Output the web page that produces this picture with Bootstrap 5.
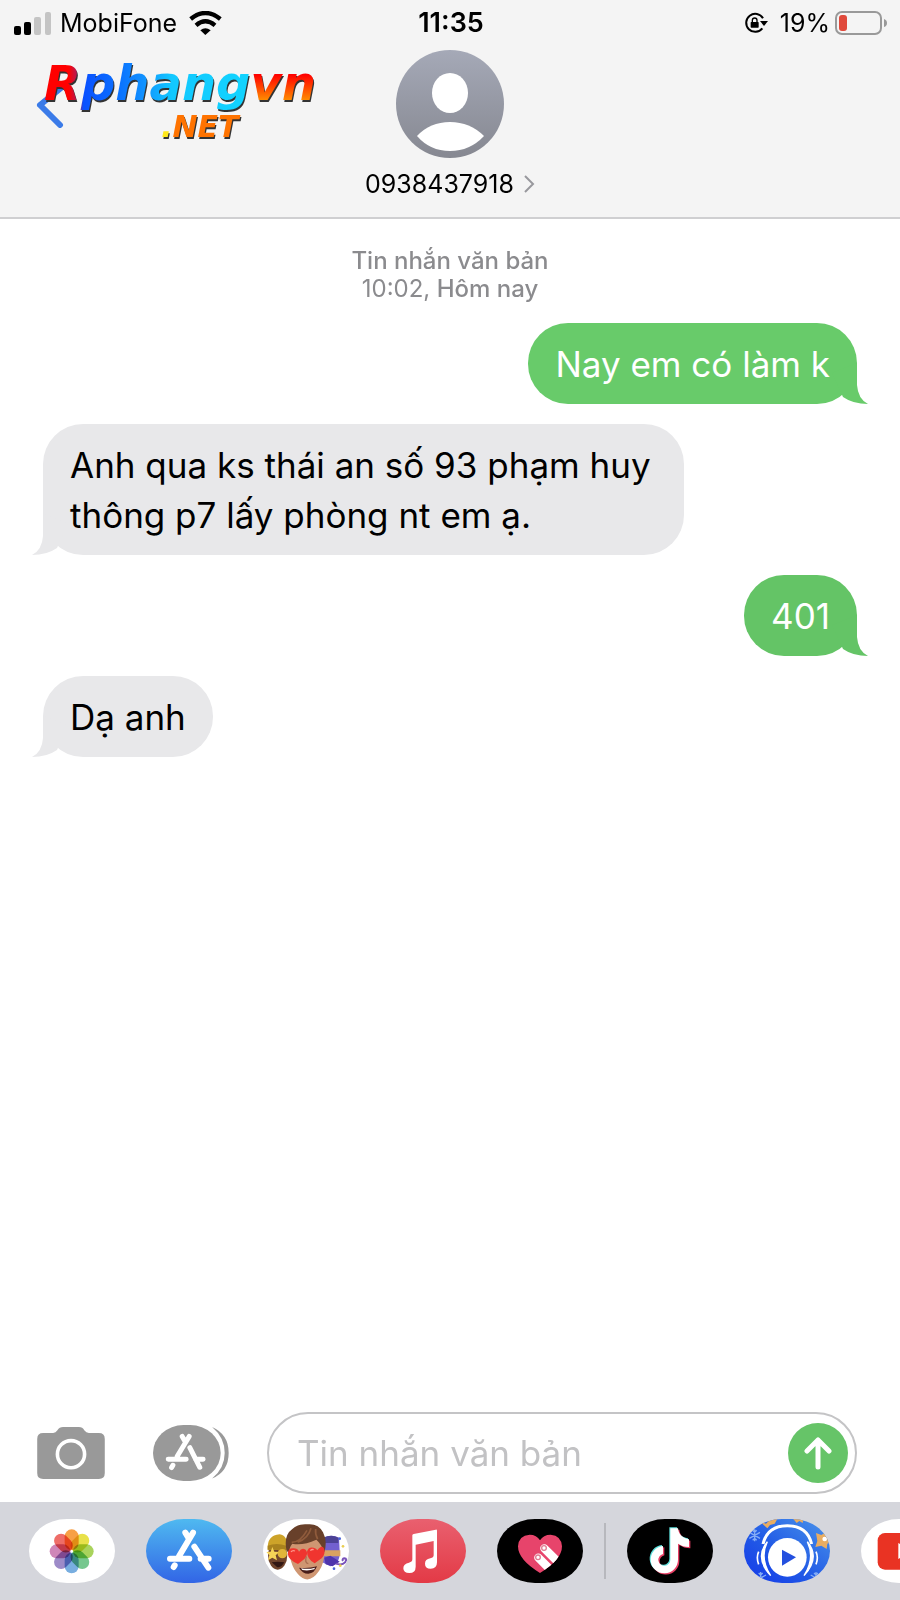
<!DOCTYPE html>
<html lang="vi">
<head>
<meta charset="utf-8">
<meta name="viewport" content="width=device-width, initial-scale=1">
<title>0938437918</title>
<link href="https://cdn.jsdelivr.net/npm/bootstrap@5.3.0/dist/css/bootstrap.min.css" rel="stylesheet">
<style>
  body { font-family: Inter, "Liberation Sans", sans-serif; color: #000; background: #fff; }
  svg { display: block; flex-shrink: 0; }
  .plain { border: 0; background: none; padding: 0; color: inherit; }

  .topbar { background: #f4f4f4; border-bottom: 2px solid #cfcfd1; }
  .status { display: grid; grid-template-columns: 1fr auto 1fr; align-items: center; height: 46px; padding: 0 12px 0 14px; font-size: 25px; line-height: 30px; }
  .clock { font-size: 27px; font-weight: 600; }
  .contact { height: 171px; padding-top: 4px; }
  .back { position: absolute; left: 36px; top: 38px; }
  .phone { font-size: 25px; line-height: 30px; margin-top: 11px; gap: 9px; color: #000; }

  .brand { position: absolute; left: 44px; top: 8px; width: 280px; font-family: "DejaVu Sans", sans-serif; font-weight: 700; font-style: italic; filter: drop-shadow(1px 2px 0 #333); }
  .brand-top { font-size: 48px; line-height: 58px; white-space: nowrap; }
  .brand-net { font-size: 30px; line-height: 30px; padding-left: 117px; color: #ff7300; }
  .brand-net b { color: #ffe81a; }
  .brand-cool, .brand-hot { -webkit-background-clip: text; background-clip: text; color: transparent; }
  .brand-cool { background-image: linear-gradient(90deg, #f00 0 12%, #a0206a 17%, #0a50ff 19%, #0a70ff 36%, #1090ff 48%, #12c8ff 62%, #12d4ff); }
  .brand-hot { background-image: linear-gradient(180deg, #f00 35%, #ff8a00 80%); }

  .thread { padding: 28px 43px 20px; gap: 20px; }
  .stamp { font-size: 24px; line-height: 28px; color: #8b8b8e; font-weight: 500; }
  .stamp time { font-weight: 400; }
  .bubble { position: relative; font-size: 35px; line-height: 50px; padding: 16px 27px 15px; border-radius: 40px; max-width: 641px; margin: 0; }
  .bubble svg { position: absolute; bottom: 0; }
  .sent { background: #68cb6a; color: #fff; align-self: flex-end; }
  .sent.late { background: #64c466; }
  .got { background: #e8e8ea; align-self: flex-start; }
  .sent svg { right: -11px; fill: #68cb6a; }
  .sent.late svg { fill: #64c466; }
  .got svg { left: -11px; fill: #e8e8ea; transform: scaleX(-1); }

  .composer { padding: 0 43px 8px 37px; }
  .field { height: 82px; min-width: 0; border: 2px solid #c4c4c6; border-radius: 41px; padding: 0 7px 0 28px; margin-left: 38px; }
  .field input { width: 0; border: 0; background: none; outline: 0; min-width: 0; font-size: 35px; line-height: 50px; padding: 0; }
  .field input::placeholder { color: #c2c2c4; opacity: 1; }
  .send { width: 60px; height: 60px; border-radius: 50%; background: #66c468; flex-shrink: 0; }

  .drawer { background: #d5d6dc; padding: 16px 0 17px 29px; height: 98px; overflow: hidden; gap: 31px; }
  .app { width: 86px; height: 64px; border-radius: 38px / 32px; overflow: hidden; flex-shrink: 0; }
  .rule { width: 2px; height: 56px; background: #b7b8bd; margin: 0 -10px; flex-shrink: 0; }
  .petals rect { mix-blend-mode: multiply; }
</style>
</head>
<body class="d-flex flex-column min-vh-100">

<header class="topbar">
  <div class="status">
    <div class="d-flex align-items-center">
      <svg width="38" height="24" viewBox="0 0 38 24"><rect y="15" width="7" height="9" rx="2"/><rect x="10" y="11" width="7" height="13" rx="2"/><g fill="#c4c4c4"><rect x="20" y="6" width="7" height="18" rx="2"/><rect x="31" y="1" width="6" height="23" rx="2"/></g></svg>
      <span class="ms-2">MobiFone</span>
      <svg class="ms-2" width="37" height="24" viewBox="-12 0 109 72"><g fill="none" stroke="#000" stroke-width="13"><path d="M4 24Q48-12 93 24"/><path d="M20 43Q48 19 77 43"/></g><path d="M33 58Q48 46 64 58L48 72Z"/></svg>
    </div>
    <div class="clock">11:35</div>
    <div class="d-flex align-items-center justify-content-end">
      <svg width="24" height="22" viewBox="0 0 72 66"><path d="M57 19A27 27 0 1 0 55 49" fill="none" stroke="#000" stroke-width="6"/><path d="M48 27H72L60 42Z"/><rect x="20" y="30" width="24" height="17" rx="2"/><path d="M25 31V25a7 7 0 0 1 14 0v6" fill="none" stroke="#000" stroke-width="4"/></svg>
      <span class="ms-2 ps-1">19%</span>
      <svg class="ms-1" width="54" height="26" viewBox="0 0 54 26"><rect x="2" y="2" width="45" height="22" rx="6" fill="none" stroke="#999" stroke-width="2"/><rect x="5" y="5" width="8" height="16" rx="3" fill="#e0493b"/><path d="M50 9q3 1 3 4t-3 4z" fill="#999"/></svg>
    </div>
  </div>
  <div class="contact position-relative d-flex flex-column align-items-center">
    <button class="plain back" aria-label="Quay lại"><svg width="28" height="44" viewBox="0 0 28 44"><path d="M25 4L4 21L24 41" fill="none" stroke="#3b7be8" stroke-width="6" stroke-linecap="round" stroke-linejoin="round"/></svg></button>
    <div class="brand">
      <div class="brand-top"><span class="brand-cool">Rphang</span><span class="brand-hot">vn</span></div>
      <div class="brand-net"><b>.</b>NET</div>
    </div>
    <svg width="108" height="108" viewBox="0 0 108 108"><defs><linearGradient id="av" x2="0" y2="1"><stop stop-color="#a5a9b7"/><stop offset="1" stop-color="#868891"/></linearGradient></defs><circle cx="54" cy="54" r="54" fill="url(#av)"/><ellipse cx="54" cy="43" rx="18" ry="20" fill="#fff"/><path d="M21 86Q34 72 54 72T88 86Q74 101 54 101T21 86Z" fill="#fff"/></svg>
    <a href="#" class="phone d-flex align-items-center text-decoration-none">0938437918<svg width="12" height="18" viewBox="0 0 12 18"><path d="M2 1L10 9L2 17" fill="none" stroke="#98989d" stroke-width="2"/></svg></a>
  </div>
</header>

<main class="thread d-flex flex-column flex-grow-1">
  <div class="stamp text-center">Tin nhắn văn bản<br><time>10:02,</time> Hôm nay</div>
  <p class="bubble sent">Nay em có làm k<svg width="36" height="41" viewBox="0 0 36 41"><path d="M11 34Q21 41 36 41Q26 36 25 22V0L0 10L11 34Z"/></svg></p>
  <p class="bubble got">Anh qua ks thái an số 93 phạm huy thông p7 lấy phòng nt em ạ.<svg width="36" height="41" viewBox="0 0 36 41"><path d="M11 34Q21 41 36 41Q26 36 25 22V0L0 10L11 34Z"/></svg></p>
  <p class="bubble sent late">401<svg width="36" height="41" viewBox="0 0 36 41"><path d="M11 34Q21 41 36 41Q26 36 25 22V0L0 10L11 34Z"/></svg></p>
  <p class="bubble got">Dạ anh<svg width="36" height="41" viewBox="0 0 36 41"><path d="M11 34Q21 41 36 41Q26 36 25 22V0L0 10L11 34Z"/></svg></p>
</main>

<footer>
  <form class="composer d-flex align-items-center">
    <button type="button" class="plain" aria-label="Máy ảnh"><svg width="68" height="52" viewBox="0 0 204 157"><path d="M18 18H48Q56 18 61 10Q67 0 78 0H126Q137 0 142 10Q148 18 156 18H186Q204 18 204 36V139Q204 157 186 157H18Q0 157 0 139V36Q0 18 18 18Z" fill="#999"/><circle cx="102" cy="82" r="41" fill="none" stroke="#fff" stroke-width="11"/></svg></button>
    <button type="button" class="plain ms-5" aria-label="Ứng dụng"><svg width="76" height="56" viewBox="0 0 229 168"><path d="M178 6Q228 28 228 84T178 161Q216 130 216 84T178 6Z" fill="#999"/><rect width="204" height="168" rx="92" ry="84" fill="#999"/><g fill="none" stroke="#fff" stroke-width="15" stroke-linecap="round"><path d="M109 34L73 94M88 34L95 46M111 68L141 127M46 103H100M128 103H151M60 121L56 128"/></g></svg></button>
    <div class="field d-flex align-items-center flex-grow-1">
      <input type="text" class="flex-grow-1" placeholder="Tin nhắn văn bản" aria-label="Tin nhắn văn bản">
      <button type="button" class="plain send d-flex align-items-center justify-content-center" aria-label="Gửi"><svg width="28" height="34" viewBox="0 0 28 34"><path d="M14 31V4M3 15L14 4L25 15" fill="none" stroke="#fff" stroke-width="5" stroke-linecap="round" stroke-linejoin="round"/></svg></button>
    </div>
  </form>

  <nav class="drawer d-flex align-items-center" aria-label="Ứng dụng iMessage">
    <button class="plain app bg-white" aria-label="Ảnh"><svg class="petals" width="86" height="64" viewBox="0 0 258 192"><g transform="translate(128 97)"><rect x="-21" y="-66" width="42" height="62" rx="21" fill="#f7a046"/><rect x="-21" y="-66" width="42" height="62" rx="21" fill="#e8e14a" transform="rotate(45)"/><rect x="-21" y="-66" width="42" height="62" rx="21" fill="#a9d35c" transform="rotate(90)"/><rect x="-21" y="-66" width="42" height="62" rx="21" fill="#76c78e" transform="rotate(135)"/><rect x="-21" y="-66" width="42" height="62" rx="21" fill="#78aee0" transform="rotate(180)"/><rect x="-21" y="-66" width="42" height="62" rx="21" fill="#9d8bc8" transform="rotate(225)"/><rect x="-21" y="-66" width="42" height="62" rx="21" fill="#cf86b8" transform="rotate(270)"/><rect x="-21" y="-66" width="42" height="62" rx="21" fill="#ee6d68" transform="rotate(315)"/></g></svg></button>
    <button class="plain app" aria-label="App Store"><svg width="86" height="64" viewBox="0 0 258 192"><defs><linearGradient id="as" x2="0" y2="1"><stop stop-color="#4fb9f0"/><stop offset="1" stop-color="#3265e6"/></linearGradient></defs><rect width="258" height="192" fill="url(#as)"/><g fill="none" stroke="#fff" stroke-width="18" stroke-linecap="round"><path d="M141 41L99 112M118 41L127 56M145 83L187 146M72 119H130M164 119H188M86 139L83 144"/></g></svg></button>
    <button class="plain app bg-white" aria-label="Memoji"><svg width="86" height="64" viewBox="0 0 258 192">
      <ellipse cx="44" cy="108" rx="29" ry="44" fill="#70442c"/><path d="M14 92Q12 48 50 46Q74 48 76 92Z" fill="#cda329"/><path d="M14 80Q40 70 70 80V92H14Z" fill="#a9821e"/><path d="M28 84l6 14 15 1-11 10 4 15-14-8-13 8 4-15-9-10 13-1z" fill="#f5d257"/><circle cx="58" cy="104" r="14" fill="#e0b53a"/><path d="M26 130Q44 126 64 130Q54 148 42 144Z" fill="#321713"/>
      <path d="M180 58Q204 44 228 56L230 96Q232 136 202 142L178 130Z" fill="#7260cf"/><path d="M180 56Q204 44 226 56V72H180Z" fill="#4c4295"/><path d="M182 94H232V112H182Z" fill="#d9a261"/><path d="M184 116L202 110L218 120L230 128L208 142L188 136Z" fill="#4e35ac"/><path d="M218 134Q238 140 246 130Q254 118 244 118Q236 120 240 126" fill="none" stroke="#7952ba" stroke-width="6"/><g fill="#4a63d8"><circle cx="230" cy="59" r="4"/><circle cx="213" cy="149" r="4"/></g><g fill="#e9ce50"><circle cx="240" cy="82" r="4"/><circle cx="232" cy="140" r="4"/></g>
      <path d="M76 76Q76 32 130 34Q184 36 184 92Q186 130 168 156Q136 202 104 164Q80 140 76 76Z" fill="#cf9672"/><path d="M70 92Q62 48 88 30Q104 14 132 16Q166 12 180 40Q194 66 184 100Q176 76 160 62Q120 80 88 74Q78 84 78 106Z" fill="#68402a"/><path d="M86 70Q112 70 132 34M104 70Q136 58 144 28M164 60Q156 46 158 30" fill="none" stroke="#8f5b3c" stroke-width="5"/>
      <path d="M105 135Q76 122 74 104Q76 86 92 88Q104 88 108 98Q116 84 128 92Q138 104 124 120Z" fill="#f0352f"/><path d="M155 133Q132 120 132 98Q136 82 152 86Q160 88 163 94Q174 78 182 86Q190 102 176 118Z" fill="#f0352f"/><path d="M84 99q4-6 12-3M142 95q4-5 10-3" fill="none" stroke="#ff9489" stroke-width="4"/><path d="M130 112Q124 132 136 134" fill="none" stroke="#a96e50" stroke-width="4"/><path d="M108 146Q134 150 162 142Q154 164 136 164Q118 164 108 146Z" fill="#481d19"/><path d="M114 148Q136 152 156 146L154 151Q136 156 118 153Z" fill="#fff"/></svg></button>
    <button class="plain app" aria-label="Nhạc"><svg width="86" height="64" viewBox="0 0 258 192"><defs><linearGradient id="mu" x2="0" y2="1"><stop stop-color="#e9606f"/><stop offset="1" stop-color="#e33a46"/></linearGradient></defs><rect width="258" height="192" fill="url(#mu)"/><path d="M97 49Q97 46 101 45L167 32Q171 31 171 35V130Q171 149 152 149Q135 149 135 134Q135 121 151 118Q161 116 161 109V66L107 77V143Q107 162 88 162Q70 162 70 148Q70 134 87 131Q97 129 97 121Z" fill="#fff"/></svg></button>
    <button class="plain app bg-black" aria-label="Digital Touch"><svg width="86" height="64" viewBox="0 0 258 192"><defs><clipPath id="hc"><path id="hp" d="M129 162Q63 122 63 82Q65 49 98 47Q119 47 129 64Q139 47 161 47Q193 50 195 82Q195 122 129 162Z"/></clipPath></defs><use href="#hp" fill="#e7446b"/><g clip-path="url(#hc)" stroke-linecap="round"><path d="M124 116L180 172M142 88L212 158" stroke="#fff" stroke-width="25"/></g><g fill="none" stroke="#e07c92" stroke-width="4"><circle cx="123" cy="115" r="7"/><circle cx="141" cy="87" r="7"/></g></svg></button>
    <span class="rule"></span>
    <button class="plain app bg-black" aria-label="TikTok"><svg width="86" height="64" viewBox="0 0 258 192"><defs><path id="tt" d="M130 28H153C155 46 167 59 186 61V84C173 84 162 80 153 74V122A41 41 0 1 1 108 81V105A18 18 0 1 0 130 122Z"/></defs><use href="#tt" x="-3" y="-3" fill="#5de0dc"/><use href="#tt" x="4" y="4" fill="#e83f65"/><use href="#tt" fill="#fff"/></svg></button>
    <button class="plain app" aria-label="Zing MP3"><svg width="86" height="64" viewBox="0 0 258 192"><defs><linearGradient id="zi" x1="0" y1="1" x2="1" y2="0"><stop stop-color="#1338e8"/><stop offset=".45" stop-color="#225be6"/><stop offset="1" stop-color="#4b95ea"/></linearGradient><g id="sn" fill="none" stroke="#85adf5" stroke-width="4"><path d="M0-18V18M-16-9L16 9M-16 9L16-9M-6-15L0-9L6-15M-6 15L0 9L6 15"/></g></defs><rect width="258" height="192" fill="url(#zi)"/><use href="#sn" x="32" y="49"/><use href="#sn" x="50" y="177"/><use href="#sn" x="216" y="177"/><g fill="#e8ad62"><path d="M216 42l16 6 16-10 2 18 14 10-14 8-2 16-16-10-18 4 6-18z"/><path d="M48 8l18 6 14-14h20l-8 14-14 4-8 10zM148 0l10 12 8-6 10 6 2-12z"/></g><circle cx="242" cy="60" r="7" fill="#fff"/><path d="M57 75Q70 20 130 20T203 75" fill="none" stroke="#fff" stroke-width="9"/><circle cx="130" cy="115" r="58" fill="#fff"/><path d="M70 68Q30 116 80 170Q46 118 70 68ZM190 68Q230 116 180 170Q214 118 190 68Z" fill="#fff" stroke="#fff" stroke-width="4"/><path d="M44 98Q36 116 44 136M216 98Q224 116 216 136" fill="none" stroke="#fff" stroke-width="5"/><path d="M114 92V140L156 115Z" fill="#2450df"/></svg></button>
    <button class="plain app bg-white" aria-label="YouTube"><svg width="86" height="64" viewBox="0 0 258 192"><rect x="50" y="42" width="158" height="110" rx="22" fill="#e93323"/><path d="M112 72V120L152 96Z" fill="#fff"/></svg></button>
  </nav>
</footer>
<script src="https://cdn.jsdelivr.net/npm/bootstrap@5.3.0/dist/js/bootstrap.bundle.min.js"></script>
</body>
</html>
